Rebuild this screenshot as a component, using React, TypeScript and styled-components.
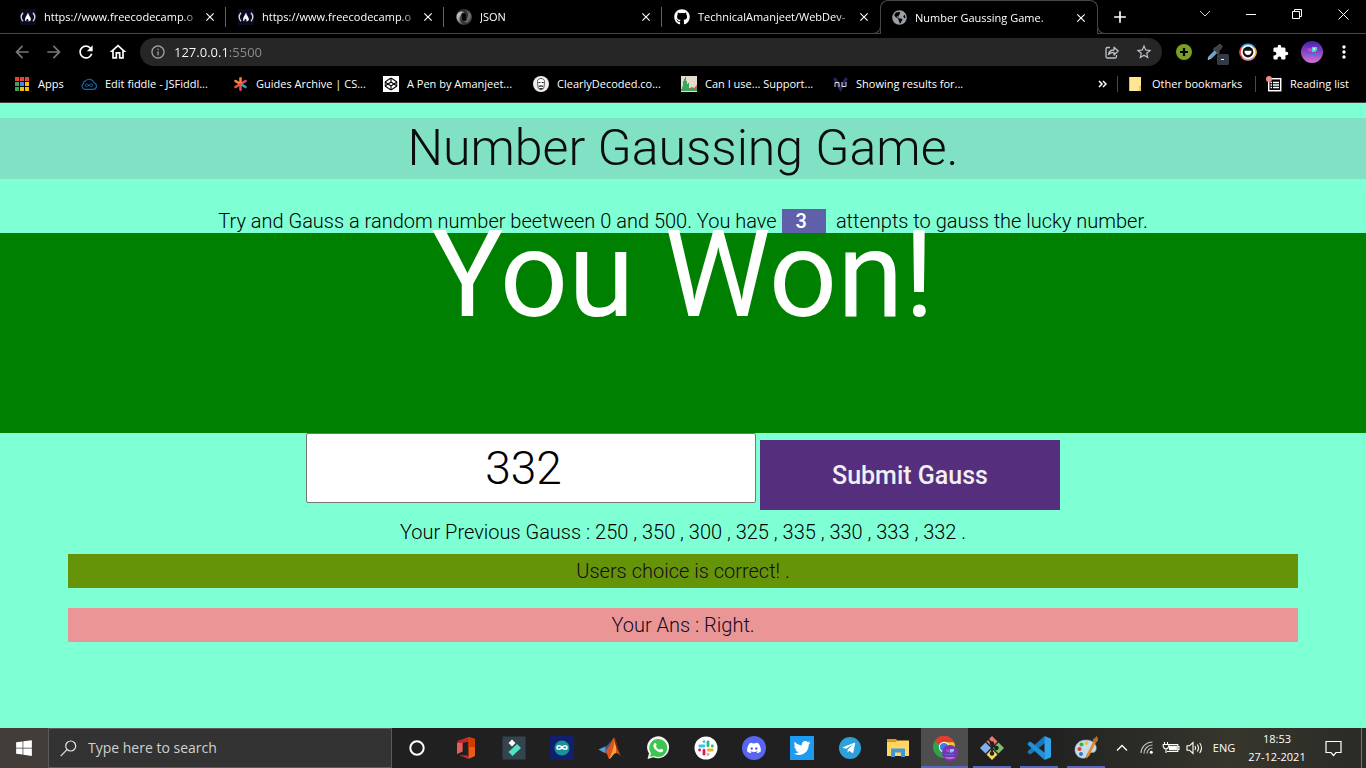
import React from "react";
import styled, { createGlobalStyle } from "styled-components";
import {
  FaGithub,
  FaDiscord,
  FaTwitter,
  FaTelegramPlane,
  FaWindows,
  FaCodepen,
  FaGlobeAmericas,
} from "react-icons/fa";
import {
  MdArrowBack,
  MdArrowForward,
  MdRefresh,
  MdOutlineHome,
  MdInfoOutline,
  MdStarBorder,
  MdMoreVert,
  MdExtension,
  MdClose,
  MdAdd,
} from "react-icons/md";

const uiFont = `"Open Sans", "Noto Sans", sans-serif`;
const gameFont = `Roboto, "Liberation Sans", sans-serif`;

const GlobalStyle = createGlobalStyle`
  *, *::before, *::after { box-sizing: border-box; }
  body { margin: 0; background: #7fffd4; }
  button { margin: 0; padding: 0; border: 0; background: none; color: inherit; font: inherit; cursor: pointer; }
  a { color: inherit; text-decoration: none; }
  svg { display: block; flex: none; }
`;

const Desktop = styled.div`
  display: flex;
  flex-direction: column;
  min-height: 100vh;
`;

/* ---------- browser chrome ---------- */

const Browser = styled.header`
  background: #000;
  color: #fff;
  font: 11px/16px ${uiFont};
  border-bottom: 1px solid #3c4043;
`;

const TabStrip = styled.div`
  display: flex;
  height: 34px;
  background: linear-gradient(#47474a, #47474a) bottom / 100% 1px no-repeat;
  padding-left: 8px;
`;

const Tab = styled.div<{ $active?: boolean; $divider?: boolean }>`
  position: relative;
  display: flex;
  align-items: center;
  flex: 0 1 218px;
  min-width: 0;
  padding: 0 8px 0 12px;
  ${(p) =>
    p.$active &&
    `
    background: #000;
    border: 1px solid #47474a;
    border-bottom: 0;
    border-radius: 8px 8px 0 0;
    padding: 0 8px 0 11px;
    &::before, &::after {
      content: "";
      position: absolute;
      bottom: 0;
      width: 8px;
      height: 8px;
      background: #000;
      border-bottom: 1px solid #47474a;
    }
    &::before { left: -8px; border-right: 1px solid #47474a; border-bottom-right-radius: 8px; }
    &::after { right: -8px; border-left: 1px solid #47474a; border-bottom-left-radius: 8px; }
  `}
  ${(p) =>
    p.$divider &&
    `background: linear-gradient(#5f6368, #5f6368) right center / 1px 20px no-repeat;`}
`;

const TabLabel = styled.a`
  flex: 1;
  min-width: 0;
  margin-left: 8px;
  overflow: hidden;
  white-space: nowrap;
  mask-image: linear-gradient(90deg, #000 calc(100% - 20px), transparent);
`;

const TabClose = styled.button`
  display: grid;
  place-items: center;
  width: 16px;
  height: 16px;
`;

const NewTab = styled.button`
  width: 44px;
  display: grid;
  place-items: center;
`;

const WindowButtons = styled.div`
  display: flex;
  margin-left: auto;
  height: 28px;
`;

const WindowButton = styled.button`
  width: 46px;
  display: grid;
  place-items: center;
`;

const Toolbar = styled.div`
  display: flex;
  align-items: center;
  height: 36px;
  padding: 0 6px;
`;

const ToolButton = styled.button<{ $dim?: boolean }>`
  flex: none;
  width: 32px;
  height: 32px;
  display: grid;
  place-items: center;
  color: ${(p) => (p.$dim ? "#777" : "#fff")};
`;

const AddressBar = styled.div`
  display: flex;
  align-items: center;
  flex: 1;
  height: 28px;
  margin: 0 6px;
  padding: 0 2px 0 10px;
  border-radius: 14px;
  background: #262626;
  color: #9aa0a6;
`;

const AddressInput = styled.input`
  flex: 1;
  min-width: 0;
  margin-left: 8px;
  padding: 0;
  border: 0;
  outline: 0;
  color: #e8eaed;
  font: 13px/20px ${uiFont};
  background: linear-gradient(90deg, #fff 54px, #8b8d90 54px);
  -webkit-background-clip: text;
  background-clip: text;
  -webkit-text-fill-color: transparent;
`;

const BookmarksBar = styled.nav`
  display: flex;
  align-items: center;
  height: 32px;
  padding: 0 14px 4px;
`;

const Bookmark = styled.a<{ $width?: number }>`
  display: flex;
  align-items: center;
  gap: 8px;
  flex: none;
  white-space: nowrap;
  ${(p) => p.$width && `width: ${p.$width}px;`}
`;

const BookmarksEnd = styled.div`
  display: flex;
  align-items: center;
  gap: 10px;
  margin-left: auto;
`;

const Divider = styled.span`
  width: 1px;
  height: 16px;
  background: #4a4a4d;
`;

/* ---------- game page ---------- */

const Game = styled.main`
  flex: 1;
  background: #7fffd4;
  color: #000;
  font: 300 20px/24px ${gameFont};
  text-align: center;
`;

const Title = styled.h1`
  margin: 15px 0 30px;
  background: #80e1c5;
  color: #0a0d0c;
  font-size: 50px;
  font-weight: 350;
  line-height: 61px;
`;

const Intro = styled.p`
  margin: 0;
`;

const Attempts = styled.span`
  display: inline-block;
  margin-right: 10px;
  padding: 0 19px 0 14px;
  background: #6060aa;
  color: #fff;
  font-weight: 500;
`;

const Banner = styled.div`
  height: 200px;
  background: #008000;
  color: #fff;
  font-size: 120px;
  font-weight: 400;
  line-height: 84px;
`;

const GuessForm = styled.form`
  display: flex;
  justify-content: center;
  gap: 4px;
  height: 87px;
`;

const GuessInput = styled.input`
  width: 450px;
  height: 70px;
  padding: 1px 2px;
  border: 1px solid #767676;
  border-radius: 2px;
  background: #fff;
  color: #000;
  font: 350 46px ${gameFont};
  text-align: center;
`;

const SubmitButton = styled.button`
  width: 300px;
  height: 70px;
  margin-top: 7px;
  background: #552f7e;
  color: #f0f0f0;
  font: 500 25px ${gameFont};
`;

const History = styled.p`
  margin: 0 0 10px;
`;

const Result = styled.p<{ $bg: string }>`
  margin: 0 5% 20px;
  padding: 5px 0;
  background: ${(p) => p.$bg};
  color: #120a20;
`;

/* ---------- taskbar ---------- */

const Taskbar = styled.footer`
  display: flex;
  height: 40px;
  color: #fff;
  font: 11px/18px ${uiFont};
  background: linear-gradient(90deg, #433d39 0, #433d39 48px, #202020 392px, #202020 76%, #36362d 90%, #2a2b26 100%);
`;

const StartButton = styled.button`
  flex: none;
  width: 48px;
  display: grid;
  place-items: center;
`;

const SearchBox = styled.label`
  display: flex;
  align-items: center;
  gap: 11px;
  flex: 0 1 344px;
  min-width: 0;
  padding: 0 11px;
  border: 1px solid #5a5a5a;
  background: #333;
`;

const SearchInput = styled.input`
  flex: 1;
  min-width: 0;
  padding: 0;
  border: 0;
  outline: 0;
  background: none;
  color: #fff;
  font: 14px/20px ${uiFont};
  &::placeholder { color: #d0d0d0; opacity: 1; }
`;

const AppButton = styled.button<{ $width?: number; $state?: "open" | "active" }>`
  flex: none;
  width: ${(p) => p.$width ?? 48}px;
  display: grid;
  place-items: center;
  ${(p) => p.$state === "active" && `background: linear-gradient(#5568bd, #5568bd) bottom / 100% 2px no-repeat, #4e4e4e;`}
  ${(p) => p.$state === "open" && `background: linear-gradient(#5568bd, #5568bd) bottom / 38px 2px no-repeat;`}
`;

const Tray = styled.div`
  display: flex;
  align-items: center;
  margin-left: auto;
`;

const TrayButton = styled.button<{ $width: number }>`
  width: ${(p) => p.$width}px;
  height: 40px;
  display: grid;
  place-items: center;
`;

const Clock = styled.time`
  width: 72px;
  text-align: center;
`;

const ShowDesktop = styled.button`
  width: 5px;
  height: 40px;
  margin-left: 8px;
  border-left: 1px solid #77776f;
`;

/* ---------- drawings ---------- */

const FreeCodeCampIcon = () => (
  <svg width="16" height="16" viewBox="0 0 16 16">
    <rect width="16" height="16" fill="#0a0a23" />
    <path d="M3 3.800C.8 6.300.8 9.700 3 12.200M13 3.800c2.200 2.500 2.200 5.900 0 8.400" fill="none" stroke="#ddd" strokeWidth="1.300" />
    <path d="M8 3.400C7.300 6 5 8 5 10.500c0 .9.400 1.500 1.300 1.900-.3-1.200.3-1.900 1-2.900.3.700 1 .8 1.200 1.500.2.500 0 1-.3 1.400 1.700-.2 2.800-1 2.700-2.400C10.800 8 8.600 6.500 8 3.400z" fill="#fff" />
  </svg>
);

const JsonIcon = () => (
  <svg width="16" height="16" viewBox="0 0 16 16">
    <defs>
      <linearGradient id="jsonDark" x1="0" y1="0" x2="1" y2="1">
        <stop offset="0" stopColor="#222" />
        <stop offset=".6" stopColor="#777" />
        <stop offset="1" stopColor="#333" />
      </linearGradient>
      <linearGradient id="jsonLight" x1="1" y1="1" x2="0" y2="0">
        <stop offset="0" stopColor="#333" />
        <stop offset="1" stopColor="#e8e8e8" />
      </linearGradient>
    </defs>
    <circle cx="8" cy="8" r="8" fill="#333" />
    <path d="M8 12.500C3 10.500 4 3 8.500 3.500 4.500 1 .5 4 .6 8.500.8 13 5.500 16 9 15.500 3 14 3 8 5 6" fill="url(#jsonLight)" />
    <path d="M8 3.500c5 2 4 9.500-.5 9 4 2.500 8 0 8-4.500C15.200 3 10.500 0 7 .5c6 1.500 6 7.500 4 9.500" fill="url(#jsonDark)" />
    <ellipse cx="8" cy="8" rx="2.600" ry="4" fill="#050505" />
  </svg>
);

const AppsIcon = () => {
  const colors = ["#ea4335", "#ea4335", "#ea4335", "#34a853", "#4285f4", "#fbbc05", "#34a853", "#fbbc05", "#fbbc05"];
  return (
    <svg width="16" height="16" viewBox="0 0 16 16">
      {colors.map((c, i) => (
        <rect key={i} x={1 + (i % 3) * 5} y={1 + Math.floor(i / 3) * 5} width="4" height="4" fill={c} />
      ))}
    </svg>
  );
};

const FiddleIcon = () => (
  <svg width="16" height="16" viewBox="0 0 16 16" fill="none" stroke="#1767a8" strokeWidth="1.200">
    <path d="M4 13.400a3.300 3.300 0 0 1-1.500-6A2.200 2.200 0 0 1 4.600 4.900 5 5 0 0 1 13 6.600a3.500 3.500 0 0 1-.6 6.800z" />
    <path d="M8 9.300C6.600 7.600 4.300 7.700 4.300 9.300S6.600 11 8 9.300c1.400-1.700 3.700-1.600 3.700 0S9.400 11 8 9.300z" strokeWidth="1" />
  </svg>
);

const CssTricksIcon = () => (
  <svg width="15" height="16" viewBox="0 0 15 16" strokeWidth="2.600" strokeLinecap="round">
    <path d="M7.500 8l5-3" stroke="#e8436b" />
    <path d="M7.500 8l5 3" stroke="#2fa8b8" />
    <path d="M7.500 8v5.800" stroke="#e8436b" />
    <path d="M7.500 8V2.200" stroke="#ff7a38" />
    <path d="M7.500 8L2.500 5" stroke="#ff8a3c" />
    <path d="M7.500 8L2.500 11" stroke="#f2542d" />
  </svg>
);

const CodepenIcon = () => (
  <svg width="16" height="16" viewBox="0 0 16 16">
    <rect width="16" height="16" fill="#fff" />
    <FaCodepen x="1.500" y="1.500" size={13} color="#000" />
  </svg>
);

const ClearlyIcon = () => (
  <svg width="16" height="16" viewBox="0 0 16 16">
    <circle cx="8" cy="8" r="8" fill="#eee" />
    <path d="M4.500 5.500C4.500 1.500 11.500 1.500 11.500 5.500L11 11c-.6 3.500-5.400 3.500-6 0z" fill="#fff" stroke="#444" strokeWidth=".9" />
    <path d="M5.500 6.500h2M8.700 6.500h2M6 10.500q2-1.200 4 0M6.500 12.500h3" stroke="#222" strokeWidth="1.100" fill="none" />
  </svg>
);

const CanIUseIcon = () => (
  <svg width="16" height="16" viewBox="0 0 16 16">
    <rect width="16" height="16" fill="#e6dccb" />
    <path d="M0 13l3-1h6l2-1 2 1 3-3v6H0z" fill="#d4574b" />
    <path d="M1 15v-4l1-1V5h1V3h1V1h1v4h1v3h1V7h1v5h1v1h2v-1h1v1h3v-2h1v4z" fill="#3ba55c" />
  </svg>
);

const NuIcon = () => (
  <svg width="15" height="16" viewBox="0 0 15 16" fill="none">
    <path d="M1.500 2l6 11 6-11" stroke="#25246a" strokeWidth="3" />
    <path d="M2 11V6.500h4V11M9 6v4.500h4V6" stroke="#ddd" />
  </svg>
);

const FolderIcon = () => (
  <svg width="16" height="16" viewBox="0 0 16 16">
    <path d="M2 1h11v9.500l-2 .5v4H2z" fill="#ffe694" />
    <path d="M11 15v-4l2-.5V15z" fill="#f4cd57" />
    <path d="M1.500 1v14" stroke="#dcb84a" />
  </svg>
);

const ReadingListIcon = () => (
  <svg width="16" height="16" viewBox="0 0 16 16" fill="none" stroke="#fff">
    <rect x="2.700" y="2.700" width="12" height="12" strokeWidth="1.500" />
    <path d="M4.500 6.500h1.500M4.500 9h1.500M4.500 11.500h1.500M7 6.500h6M7 9h6M7 11.500h6" strokeWidth="1.300" />
    <circle cx="3" cy="3" r="3" fill="#f28b82" stroke="none" />
  </svg>
);

const ShareIcon = () => (
  <svg width="16" height="16" viewBox="0 0 16 16" fill="none" stroke="#bdc1c6" strokeWidth="1.300">
    <path d="M6 3.500H3.500A1.500 1.500 0 0 0 2 5v7.500A1.500 1.500 0 0 0 3.500 14H11a1.500 1.500 0 0 0 1.500-1.500V11" />
    <path d="M4.500 10.500C5 7.500 7 6 10 6V3.200l4.200 3.900L10 11V8.400c-2.500 0-4.200.7-5.500 2.100z" strokeLinejoin="round" />
  </svg>
);

const PlusExtensionIcon = () => (
  <svg width="16" height="16" viewBox="0 0 16 16">
    <circle cx="8" cy="8" r="8" fill="#7a9e26" />
    <path d="M8 4v8M4 8h8" stroke="#000" strokeWidth="2.200" />
  </svg>
);

const PickerIcon = () => (
  <svg width="26" height="26" viewBox="0 0 26 26">
    <path d="M5 20.500l1-3L12 11.500l2 2-6 6z" fill="#5aa0e0" stroke="#cfe4f5" strokeWidth=".7" />
    <path d="M10.500 10.500l4.500 4.500 1.500-1.500-1-1.500 3-3c1.500-2-1-4.500-3-3l-3 3-1-.5z" fill="#3b4146" stroke="#70777c" strokeWidth=".6" />
    <rect x="14" y="15" width="12" height="11" rx="1.500" fill="#323a45" />
    <path d="M18 20.500h3" stroke="#fff" />
  </svg>
);

const RingIcon = () => (
  <svg width="18" height="18" viewBox="0 0 16 16">
    <circle cx="8" cy="8" r="7" fill="#fff" />
    <g fill="none" strokeWidth="1.500">
      <path d="M2 4.500A7 7 0 0 1 14 4.500" stroke="#4aa3d8" />
      <path d="M14 4.500a7 7 0 0 1-1 8.500" stroke="#f2b33d" />
      <path d="M13 13a7 7 0 0 1-10 0" stroke="#ef8fa8" />
      <path d="M3 13a7 7 0 0 1-1-8.500" stroke="#e8473c" />
    </g>
    <circle cx="8" cy="8" r="4.800" fill="#111" />
    <path d="M4.800 6.800h6.400c0 5.200-6.400 5.200-6.400 0z" fill="#fff" />
  </svg>
);

const AvatarIcon = () => (
  <svg width="22" height="22" viewBox="0 0 22 22">
    <defs>
      <linearGradient id="avatar" x1="0" y1="0" x2="0" y2="1">
        <stop offset="0" stopColor="#4322b0" />
        <stop offset=".5" stopColor="#8b44c0" />
        <stop offset="1" stopColor="#d873dc" />
      </linearGradient>
    </defs>
    <circle cx="11" cy="11" r="11" fill="url(#avatar)" />
    <path d="M6 7.500h5v3H8z" fill="#d63fd6" />
    <path d="M11 6h5v3l-2 2h-3z" fill="#4ad6e8" />
    <path d="M12 7h2v2h-2z" fill="#d8ef5a" />
    <path d="M4 13.500h14" stroke="#3f7fe0" strokeDasharray="2 1" />
  </svg>
);

const SearchIcon = () => (
  <svg width="17" height="17" viewBox="0 0 17 17" fill="none" stroke="#e6e6e6" strokeWidth="1.200">
    <circle cx="10.700" cy="6" r="5" />
    <path d="M7 9.700L.7 16.200" />
  </svg>
);

const OfficeIcon = () => (
  <svg width="20" height="24" viewBox="0 0 20 24">
    <path d="M12.500 1L2.500 4.500Q1 5 1 7v11l5.500-2.500V7l6-1.500z" fill="#c4282a" />
    <path d="M1 7v11l5.500-2.500V7z" fill="#e0605f" />
    <path d="M12.500 1L19 3v17l-6.500 3z" fill="#f25a12" />
    <path d="M12.500 1L19 3v8h-6.500z" fill="#d83b01" />
    <path d="M3 19l9.500.8V23z" fill="#c92a3a" />
  </svg>
);

const FilmoraIcon = () => (
  <svg width="24" height="24" viewBox="0 0 24 24">
    <rect x=".5" y=".5" width="23" height="23" fill="#33444f" />
    <path d="M10 3.500l3.500 3.500L10 10.500 6.500 7z" fill="#fff" />
    <path d="M15 8l4 4-8.500 8-4-4z" fill="#4fe3c1" />
  </svg>
);

const ArduinoIcon = () => (
  <svg width="24" height="24" viewBox="0 0 24 24">
    <rect width="24" height="24" fill="#10206f" />
    <circle cx="12" cy="12" r="7.500" fill="#13949b" />
    <path d="M12 11.500c-1.700-2.500-5-2.300-5 0s3.300 2.500 5 0c1.700-2.500 5-2.300 5 0s-3.300 2.500-5 0z" fill="none" stroke="#fff" strokeWidth="1.500" />
  </svg>
);

const MatlabIcon = () => (
  <svg width="24" height="24" viewBox="0 0 24 24">
    <path d="M.5 13.500l6.500-3 3.500 2.500-4 4z" fill="#4f9fd8" />
    <path d="M7 10.500c3-.5 5-5 6-6.500l-2 9-4.500 4c1-3 1.500-4.500.5-6.500z" fill="#2b5f94" />
    <path d="M16 1.500c-3 3-4 9-9.500 15 3 0 3 4 4.500 6.500 3-1 4-6 7-6 2 0 4 2 5.500 4.500C20 16 19 5 16 1.500z" fill="#d9541e" />
    <path d="M16 1.500c1 6-1 14-5 21.500 3-1 4-6 7-6C18.500 12 17.500 5 16 1.500z" fill="#f7a535" />
    <path d="M16 1.500c.5 6 3 12 7.500 20C20 16 19 5 16 1.500z" fill="#7c1a10" />
  </svg>
);

const WhatsappIcon = () => (
  <svg width="24" height="24" viewBox="0 0 24 24">
    <path d="M1.500 23L3 17.500A11 11 0 1 1 7.500 21.300z" fill="#f5f5f5" />
    <path d="M4 21l1-3.700A9 9 0 1 1 8 19.900z" fill="#3fc351" />
    <path d="M8.500 7.200c.5-.5 1.200-.4 1.500.3l.6 1.500c.2.500-.7 1.200-.7 1.500.8 1.600 2 2.700 3.600 3.300.4.100 1-1.100 1.500-1l1.700.8c.7.400.6 1 .2 1.600-.9 1.400-2.800 1.300-4.500.5-2.300-1-4-2.700-4.800-4.700-.5-1.500-.1-3 .9-3.800z" fill="#fff" />
  </svg>
);

const SlackIcon = () => (
  <svg width="24" height="24" viewBox="0 0 24 24">
    <circle cx="12" cy="12" r="11.500" fill="#fff" />
    <g fill="none" strokeWidth="2.800" strokeLinecap="round">
      <path d="M5.800 10h4M10 5.600v.1" stroke="#36c5f0" />
      <path d="M14 5.800v4M18.300 10h.1" stroke="#2eb67d" />
      <path d="M14.200 14h4M14 18.300v.1" stroke="#ecb22e" />
      <path d="M10 14.200v4M5.600 14h.1" stroke="#e01e5a" />
    </g>
  </svg>
);

const DiscordIcon = () => (
  <svg width="24" height="24" viewBox="0 0 24 24">
    <circle cx="12" cy="12" r="12" fill="#5865f2" />
    <FaDiscord x="4.500" y="4.500" size={15} color="#fff" />
  </svg>
);

const TwitterIcon = () => (
  <svg width="24" height="24" viewBox="0 0 24 24">
    <rect width="24" height="24" fill="#1d9bf0" />
    <FaTwitter x="3.500" y="3.500" size={17} color="#fff" />
  </svg>
);

const TelegramIcon = () => (
  <svg width="24" height="24" viewBox="0 0 24 24">
    <circle cx="12" cy="12" r="11" fill="#2ba0da" />
    <FaTelegramPlane x="4" y="5" size={14} color="#fff" />
  </svg>
);

const ExplorerIcon = () => (
  <svg width="24" height="24" viewBox="0 0 24 24">
    <path d="M1 3h9l2 2.500H1z" fill="#e59a10" />
    <path d="M1 5.500h9l1.500-1H23V20H1z" fill="#ffd566" />
    <path d="M5 21v-7.500q0-1 1-1h12q1 0 1 1V21h-4v-4H9v4z" fill="#3f97d8" />
    <path d="M9 16.500h6V20H9z" fill="#ffd566" />
  </svg>
);

const ChromeIcon = () => (
  <svg width="26" height="26" viewBox="0 0 26 26">
    <circle cx="12" cy="12" r="11" fill="#2fa24c" />
    <path d="M12 12L2.400 6.500A11 11 0 0 1 21.600 6.500L22 7.500H12z" fill="#e33b2e" />
    <path d="M12 7.200h9.900A11 11 0 0 1 11.500 23L16.300 14.500z" fill="#fcc31e" />
    <circle cx="12" cy="12" r="5.200" fill="#fff" />
    <circle cx="12" cy="12" r="4.100" fill="#3a7de0" />
    <circle cx="18" cy="18" r="8" fill="#7a35b5" />
    <path d="M14 14.500h3.500v2.500H15z" fill="#d63fd6" />
    <path d="M18 14h4v2l-2 1.500h-2z" fill="#6ad6e8" />
    <path d="M13.500 19.500h9" stroke="#4a7fe0" strokeDasharray="2 1" />
    <path d="M12.500 22a8 8 0 0 0 11 0z" fill="#c565d4" />
  </svg>
);

const GitIcon = () => (
  <svg width="24" height="24" viewBox="0 0 24 24">
    <path d="M12 0l5.500 5.500L12 11 6.500 5.500z" fill="#f0766b" />
    <path d="M18.500 6.500L24 12l-5.500 5.500L13 12z" fill="#7ac36a" />
    <path d="M5.500 6.500L11 12l-5.500 5.500L0 12z" fill="#7fb2f2" />
    <path d="M12 13l5.500 5.500L12 24l-5.500-5.500z" fill="#f5d860" />
    <path d="M8 3l4 4.500V18M12 8l4.500 4.500" stroke="#222" strokeWidth="1.800" fill="none" />
    <g fill="#222">
      <circle cx="12" cy="7.500" r="2.200" />
      <circle cx="12" cy="17.500" r="2.200" />
      <circle cx="16.500" cy="12" r="2.200" />
    </g>
  </svg>
);

const VscodeIcon = () => (
  <svg width="24" height="24" viewBox="0 0 24 24">
    <path d="M17.500 0L1 15l-.6 1.300 2 2L4 18 18 7z" fill="#1b78bd" />
    <path d="M17.500 24L1 9 .4 7.700l2-2L4 6l14 11z" fill="#2091d8" />
    <path d="M17.500 0L24 2.800v18.400L17.500 24z" fill="#2fa4ea" />
  </svg>
);

const PaintIcon = () => (
  <svg width="26" height="24" viewBox="0 0 26 24">
    <path d="M13 4C6 4 1.500 9 2 14.500 2.400 19.500 7 23 11.500 22c3-.6 1.500-3.500 3.500-5 2-1.400 6.500 1 8-3C24.500 9 20 4 13 4z" fill="#c8dcea" stroke="#90aec4" strokeWidth=".6" />
    <circle cx="6.500" cy="13" r="2.100" fill="#e23c30" />
    <circle cx="8.500" cy="8.500" r="2" fill="#3fae49" />
    <circle cx="13.500" cy="7" r="1.900" fill="#f3c32e" />
    <circle cx="8" cy="18" r="2" fill="#2c78d0" />
    <path d="M21 4L14 18l-1 5 3.500-3.500L23.500 5z" fill="#e38a2c" />
    <path d="M19.500 3.500Q22 3 23.500 0q2 2 1.500 4.500l-2.500 3z" fill="#b5702c" />
  </svg>
);

const WifiIcon = () => (
  <svg width="16" height="16" viewBox="0 0 16 16" fill="none" strokeWidth="1.100">
    <g stroke="#c4c4c0">
      <path d="M2 13A11.500 11.500 0 0 1 13.500 2" />
      <path d="M5 13.500A8.500 8.500 0 0 1 13.500 5" />
      <path d="M8 13.500A5.500 5.500 0 0 1 13.500 8" />
    </g>
    <circle cx="12.300" cy="12.300" r="1.500" fill="#fff" />
  </svg>
);

const BatteryIcon = () => (
  <svg width="18" height="14" viewBox="0 0 18 14" fill="none" stroke="#fff" strokeWidth="1.100">
    <path d="M6.500 3.500h9.300v7H5" />
    <path d="M15.800 5.500h1.200v3h-1.200" />
    <path d="M7.500 5.300h6.800v3.500H7.500z" fill="#fff" />
    <path d="M2.500 1v2.500M5.500 1v2.500M1.200 3.500h5.600v2Q6 8 4 8 2 8 1.200 5.500zM4 8v4" />
  </svg>
);

const SpeakerIcon = () => (
  <svg width="18" height="16" viewBox="0 0 18 16" fill="none" stroke="#fff" strokeWidth="1.100">
    <path d="M1 5.800h2.500L7 2.500v11L3.500 10.200H1z" />
    <path d="M9 6q1.300 2 0 4M11.300 4.500q2.400 3.500 0 7M13.700 3q3.600 5 0 10" />
  </svg>
);

const tabs = [
  { label: "https://www.freecodecamp.o", icon: <FreeCodeCampIcon />, divider: true },
  { label: "https://www.freecodecamp.o", icon: <FreeCodeCampIcon />, divider: true },
  { label: "JSON", icon: <JsonIcon />, divider: true },
  { label: "TechnicalAmanjeet/WebDev-", icon: <FaGithub size={16} /> },
  { label: "Number Gaussing Game.", icon: <FaGlobeAmericas size={15} color="#9aa0a6" />, active: true },
];

const bookmarks = [
  { label: "Apps", icon: <AppsIcon />, width: 67 },
  { label: "Edit fiddle - JSFiddl...", icon: <FiddleIcon />, width: 152 },
  { label: "Guides Archive | CS...", icon: <CssTricksIcon />, width: 150 },
  { label: "A Pen by Amanjeet...", icon: <CodepenIcon />, width: 150 },
  { label: "ClearlyDecoded.co...", icon: <ClearlyIcon />, width: 148 },
  { label: "Can I use... Support...", icon: <CanIUseIcon />, width: 152 },
  { label: "Showing results for...", icon: <NuIcon /> },
];

const apps: { name: string; icon: React.ReactNode; width?: number; state?: "open" | "active" }[] = [
  { name: "Office", icon: <OfficeIcon /> },
  { name: "Filmora", icon: <FilmoraIcon /> },
  { name: "Arduino", icon: <ArduinoIcon /> },
  { name: "MATLAB", icon: <MatlabIcon /> },
  { name: "WhatsApp", icon: <WhatsappIcon /> },
  { name: "Slack", icon: <SlackIcon /> },
  { name: "Discord", icon: <DiscordIcon /> },
  { name: "Twitter", icon: <TwitterIcon /> },
  { name: "Telegram", icon: <TelegramIcon /> },
  { name: "File Explorer", icon: <ExplorerIcon />, width: 47 },
  { name: "Google Chrome", icon: <ChromeIcon />, width: 47, state: "active" },
  { name: "Git", icon: <GitIcon />, width: 47, state: "open" },
  { name: "Visual Studio Code", icon: <VscodeIcon />, width: 47, state: "open" },
  { name: "Paint", icon: <PaintIcon />, width: 47, state: "open" },
];

const guesses = [250, 350, 300, 325, 335, 330, 333, 332];

export default function App() {
  return (
    <Desktop>
      <GlobalStyle />
      <Browser>
        <TabStrip>
          {tabs.map((t, i) => (
            <Tab key={i} $active={t.active} $divider={t.divider}>
              {t.icon}
              <TabLabel href="#">{t.label}</TabLabel>
              <TabClose aria-label="Close tab">
                <MdClose size={14} />
              </TabClose>
            </Tab>
          ))}
          <NewTab aria-label="New tab">
            <MdAdd size={20} />
          </NewTab>
          <WindowButtons>
            <WindowButton aria-label="Search tabs">
              <svg width="12" height="8" viewBox="0 0 12 8" fill="none" stroke="#ccc">
                <path d="M1 1l5 5 5-5" />
              </svg>
            </WindowButton>
            <WindowButton aria-label="Minimize">
              <svg width="10" height="10" viewBox="0 0 10 10" stroke="#fff">
                <path d="M0 5.500h10" />
              </svg>
            </WindowButton>
            <WindowButton aria-label="Restore">
              <svg width="10" height="10" viewBox="0 0 10 10" fill="none" stroke="#fff">
                <path d="M.5 2.500h7v7h-7zM2.500 2.500v-2h7v7h-2" />
              </svg>
            </WindowButton>
            <WindowButton aria-label="Close window">
              <svg width="11" height="11" viewBox="0 0 11 11" stroke="#fff">
                <path d="M.5.5l10 10M10.500.5l-10 10" />
              </svg>
            </WindowButton>
          </WindowButtons>
        </TabStrip>

        <Toolbar>
          <ToolButton $dim aria-label="Back"><MdArrowBack size={20} /></ToolButton>
          <ToolButton $dim aria-label="Forward"><MdArrowForward size={20} /></ToolButton>
          <ToolButton aria-label="Reload"><MdRefresh size={20} /></ToolButton>
          <ToolButton aria-label="Home"><MdOutlineHome size={20} /></ToolButton>
          <AddressBar>
            <MdInfoOutline size={16} />
            <AddressInput aria-label="Address" defaultValue="127.0.0.1:5500" />
            <ToolButton aria-label="Share"><ShareIcon /></ToolButton>
            <ToolButton aria-label="Bookmark this page"><MdStarBorder size={18} color="#bdc1c6" /></ToolButton>
          </AddressBar>
          <ToolButton aria-label="Add extension"><PlusExtensionIcon /></ToolButton>
          <ToolButton aria-label="Colour picker"><PickerIcon /></ToolButton>
          <ToolButton aria-label="Recorder"><RingIcon /></ToolButton>
          <ToolButton aria-label="Extensions"><MdExtension size={17} /></ToolButton>
          <ToolButton aria-label="Profile"><AvatarIcon /></ToolButton>
          <ToolButton aria-label="Menu"><MdMoreVert size={20} /></ToolButton>
        </Toolbar>

        <BookmarksBar>
          {bookmarks.map((b) => (
            <Bookmark key={b.label} href="#" $width={b.width}>
              {b.icon}
              {b.label}
            </Bookmark>
          ))}
          <BookmarksEnd>
            <button aria-label="More bookmarks">
              <svg width="9" height="8" viewBox="0 0 9 8" fill="none" stroke="#fff" strokeWidth="1.500">
                <path d="M1 1l3 3-3 3M5 1l3 3-3 3" />
              </svg>
            </button>
            <Divider />
            <Bookmark href="#" $width={117}><FolderIcon />Other bookmarks</Bookmark>
            <Divider />
            <Bookmark href="#" $width={86}><ReadingListIcon />Reading list</Bookmark>
          </BookmarksEnd>
        </BookmarksBar>
      </Browser>

      <Game>
        <Title>Number Gaussing Game.</Title>
        <Intro>
          Try and Gauss a random number beetween 0 and 500. You have <Attempts>3</Attempts>
          attenpts to gauss the lucky number.
        </Intro>
        <Banner>You Won!</Banner>
        <GuessForm onSubmit={(e) => e.preventDefault()}>
          <GuessInput type="number" aria-label="Your gauss" defaultValue={332} />
          <SubmitButton type="submit">Submit Gauss</SubmitButton>
        </GuessForm>
        <History>Your Previous Gauss : {guesses.join(" , ")} .</History>
        <Result $bg="#669409">Users choice is correct! .</Result>
        <Result $bg="#ea9696">Your Ans : Right.</Result>
      </Game>

      <Taskbar>
        <StartButton aria-label="Start"><FaWindows size={18} /></StartButton>
        <SearchBox>
          <SearchIcon />
          <SearchInput type="search" aria-label="Search" placeholder="Type here to search" />
        </SearchBox>
        <AppButton $width={50} aria-label="Cortana">
          <svg width="16" height="16" viewBox="0 0 16 16" fill="none" stroke="#fff" strokeWidth="2">
            <circle cx="8" cy="8" r="6.700" />
          </svg>
        </AppButton>
        {apps.map((a) => (
          <AppButton key={a.name} aria-label={a.name} $width={a.width} $state={a.state}>
            {a.icon}
          </AppButton>
        ))}
        <Tray>
          <TrayButton $width={26} aria-label="Show hidden icons">
            <svg width="12" height="8" viewBox="0 0 12 8" fill="none" stroke="#fff" strokeWidth="1.300">
              <path d="M1 6.500l5-5 5 5" />
            </svg>
          </TrayButton>
          <TrayButton $width={24} aria-label="Network"><WifiIcon /></TrayButton>
          <TrayButton $width={24} aria-label="Battery"><BatteryIcon /></TrayButton>
          <TrayButton $width={24} aria-label="Volume"><SpeakerIcon /></TrayButton>
          <TrayButton $width={34} aria-label="Language">ENG</TrayButton>
          <Clock>18:53<br />27-12-2021</Clock>
          <TrayButton $width={40} aria-label="Notifications">
            <svg width="17" height="17" viewBox="0 0 17 17" fill="none" stroke="#fff" strokeWidth="1.200">
              <path d="M1 1.500h15v11h-5l-2.500 3-2.500-3H1z" />
            </svg>
          </TrayButton>
          <ShowDesktop aria-label="Show desktop" />
        </Tray>
      </Taskbar>
    </Desktop>
  );
}
